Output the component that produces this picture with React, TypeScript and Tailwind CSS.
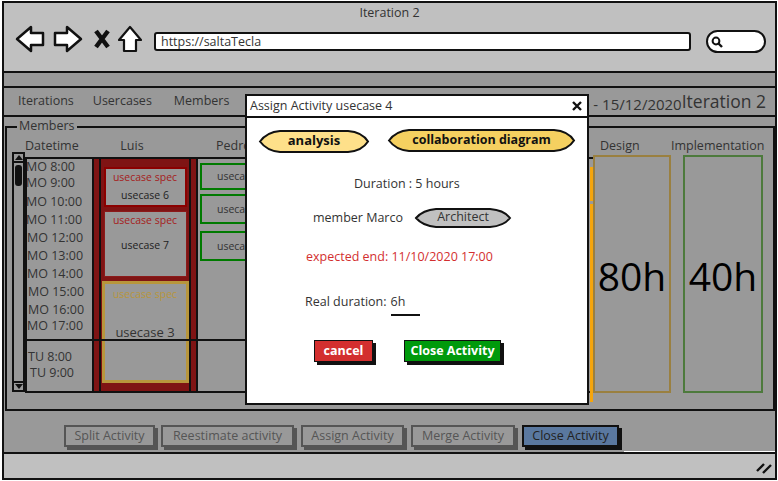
const times = [
  { t: "MO 8:00", c: "" },
  { t: "MO 9:00", c: "" },
  { t: "MO 10:00", c: "mt-[3px]" },
  { t: "MO 11:00", c: "mt-[2px]" },
  { t: "MO 12:00", c: "ml-[1px] mt-[2px]" },
  { t: "MO 13:00", c: "ml-[1px] mt-[2px]" },
  { t: "MO 14:00", c: "ml-[1px] mt-[2px]" },
  { t: "MO 15:00", c: "ml-[2px] mt-[2px]" },
  { t: "MO 16:00", c: "ml-[2px] mt-[2px]" },
  { t: "MO 17:00", c: "ml-[1px]" },
  { t: "TU 8:00", c: "ml-[2px] mt-[15px]" },
  { t: "TU 9:00", c: "ml-[4px]" },
];

function Pill({ w, h, fill, className, children }: { w: number; h: number; fill: string; className: string; children: React.ReactNode }) {
  const m = h / 2;
  const d = `M2 ${m} Q9 3 22 2 L${w - 22} 2 Q${w - 8} 3 ${w - 2} ${m} Q${w - 8} ${h - 3} ${w - 22} ${h - 2} L22 ${h - 2} Q9 ${h - 3} 2 ${m} Z`;
  return (
    <div className={`relative flex items-center justify-center ${className}`}>
      <svg width={w} height={h} className="absolute left-0 top-0">
        <path d={d} fill={fill} stroke="#111" strokeWidth="2" />
      </svg>
      <span className="relative -mt-[1px]">{children}</span>
    </div>
  );
}

function BarButton({ className, children }: { className: string; children: React.ReactNode }) {
  return (
    <button className={`h-[22px] border-2 border-[#555] text-[#555] text-[12.5px] leading-none shadow-[3px_3px_0_#555] ${className}`}>
      {children}
    </button>
  );
}

export default function App() {
  return (
    <div className="relative w-[778px] h-[481px] overflow-hidden bg-white text-[#333] font-['Open_Sans','Noto_Sans',sans-serif]">
      <div className="flex flex-col ml-[2px] mt-[1px] w-[775px] h-[479px] border-2 border-[#111]">
        {/* browser header */}
        <div className="h-[70px] shrink-0 bg-[#c0c0c0] border-b-2 border-[#111]">
          <div className="text-center text-[12.5px] leading-[20px]">Iteration 2</div>
          <div className="flex items-center h-[32px] pl-[11px]">
            <svg width="30" height="28" viewBox="0 0 30 28">
              <path d="M2 14 L16 2 L16 8 L28 8 L28 20 L16 20 L16 26 Z" fill="#fff" stroke="#111" strokeWidth="2.5" strokeLinejoin="round" />
            </svg>
            <svg width="30" height="28" viewBox="0 0 30 28" className="ml-[8px]">
              <path d="M28 14 L14 2 L14 8 L2 8 L2 20 L14 20 L14 26 Z" fill="#fff" stroke="#111" strokeWidth="2.5" strokeLinejoin="round" />
            </svg>
            <svg width="18" height="20" viewBox="0 0 18 20" className="ml-[10px]">
              <path d="M3 2 L15 18 M15 2 L3 18" stroke="#111" strokeWidth="4.5" fill="none" />
            </svg>
            <svg width="24" height="28" viewBox="0 0 24 28" className="ml-[7px]">
              <path d="M12 2 L23 15 L18 15 L18 26 L6 26 L6 15 L1 15 Z" fill="#fff" stroke="#111" strokeWidth="2.2" strokeLinejoin="round" />
            </svg>
            <div className="ml-[12px] mt-[5px] w-[537px] h-[19px] bg-white border-2 border-[#111] rounded-[3px] pl-[5px] text-[12.5px] leading-[15px]">
              https://saltaTecla
            </div>
            <div className="flex items-center ml-[15px] mt-[5px] w-[60px] h-[23px] bg-white border-2 border-[#111] rounded-full pl-[3px]">
              <svg width="12" height="12" viewBox="0 0 12 12">
                <circle cx="5" cy="5" r="3.4" fill="none" stroke="#111" strokeWidth="2" />
                <path d="M7.5 7.5 L11 11" stroke="#111" strokeWidth="2.4" />
              </svg>
            </div>
          </div>
        </div>
        <div className="h-[15px] shrink-0 bg-[#999] border-b-2 border-[#111]" />

        {/* tabs */}
        <div className="flex items-center justify-between h-[29px] shrink-0 bg-[#999] border-b-2 border-[#111] text-[12.5px] pl-[14px]">
          <div className="flex">
            <span>Iterations</span>
            <span className="ml-[19px]">Usercases</span>
            <span className="ml-[22px]">Members</span>
          </div>
          <div className="flex items-center">
            <span className="text-[15px] mt-[5px]">01/10/2020 - 15/12/2020</span>
            <span className="text-[17.5px] mr-[9px] mb-[1px]">Iteration 2</span>
          </div>
        </div>

        {/* members panel */}
        <div className="h-[294px] shrink-0 bg-[#999] pt-[9px] pl-[1px]">
          <div className="relative flex h-[285px] border-2 border-[#111] pl-[5px]">
            <div className="flex w-full text-[12.5px]">
              {/* scrollbar */}
              <div className="flex flex-col shrink-0 w-[13px] h-[240px] mt-[24px] border-2 border-[#111] items-center">
                <div className="w-full h-[9px] border-b-2 border-[#111] flex justify-center items-center">
                  <div className="w-0 h-0 border-x-[4px] border-x-transparent border-b-[5px] border-b-[#111]" />
                </div>
                <div className="mt-[2px] w-[7px] h-[21px] rounded-[3px] bg-[#111]" />
                <div className="mt-auto w-full h-[9px] border-t-2 border-[#111] flex justify-center items-center">
                  <div className="w-0 h-0 border-x-[4px] border-x-transparent border-t-[5px] border-t-[#111]" />
                </div>
              </div>

              {/* datetime */}
              <div className="w-[69px] shrink-0">
                <div className="h-[29px] pt-[10px] pr-[20px] text-center leading-[16px]">Datetime</div>
                <div className="h-[236px] border-y-2 border-x-2 border-[#111] leading-[16px]">
                  <div className="-ml-[1px] whitespace-nowrap">
                    {times.map((x) => (
                      <div key={x.t} className={x.c}>{x.t}</div>
                    ))}
                  </div>
                </div>
              </div>

              {/* Luis */}
              <div className="w-[104px] shrink-0">
                <div className="h-[29px] pt-[10px] pr-[28px] text-center leading-[16px]">Luis</div>
                <div className="h-[236px] border-y-2 border-r-2 border-[#111] bg-[#7f1414] px-[5px]">
                  <div className="h-full flex flex-col items-center border-x-2 border-[#111] pt-[8px]">
                    <div className="flex flex-col items-center w-[83px] h-[40px] bg-[#999] border-2 border-[#8b0000] text-[10.5px] pt-[1px] leading-[14px]">
                      <span className="text-[#a52020]">usecase spec</span>
                      <span className="mt-[4px] text-[#222]">usecase 6</span>
                    </div>
                    <div className="flex flex-col items-center mt-[4px] w-[83px] h-[66px] bg-[#999] border border-[#8b1a1a] text-[10.5px] leading-[14px]">
                      <span className="text-[#a52020] mt-[1px]">usecase spec</span>
                      <span className="mt-[11px] text-[#222]">usecase 7</span>
                    </div>
                    <div className="flex flex-col items-center mt-[4px] w-[87px] h-[102px] bg-[#999] border-[3px] border-[#b8963c] text-[10.5px] leading-[14px]">
                      <span className="text-[#b8963c] mt-[3px]">usecase spec</span>
                      <span className="mt-[24px] text-[13px]">usecase 3</span>
                    </div>
                  </div>
                </div>
              </div>

              {/* Pedro and the columns under the dialog */}
              <div className="w-[395px] shrink-0">
                <div className="h-[29px] pt-[10px] pl-[18px] leading-[16px]">Pedro</div>
                <div className="relative h-[236px] border-y-2 border-[#111]">
                  <div className="flex flex-col gap-[4px] w-[60px] pl-[2px] pt-[4px] text-[10.5px]">
                    <div className="h-[27px] w-[70px] border-2 border-[#007a00] pl-[15px] leading-[23px]">usecase 1</div>
                    <div className="h-[30px] w-[70px] border-2 border-[#007a00] pl-[15px] leading-[26px]">usecase 2</div>
                    <div className="mt-[3px] h-[30px] w-[70px] border-2 border-[#007a00] pl-[15px] leading-[26px]">usecase 4</div>
                  </div>
                  <div className="absolute right-0 top-[8px] h-[34px] w-[3px] bg-[#f5a50c]" />
                  <div className="absolute right-0 top-[45px] -bottom-[11px] w-[3px] bg-[#f5a50c]" />
                </div>
              </div>

              {/* Design */}
              <div className="w-[90px] shrink-0">
                <div className="h-[27px] pt-[10px] pl-[7px] leading-[16px]">Design</div>
                <div className="flex items-center justify-center w-[78px] h-[238px] pt-[5px] border-2 border-[#9a8040] text-[39px] text-black">80h</div>
              </div>

              {/* Implementation */}
              <div className="w-[82px] shrink-0 relative">
                <div className="h-[27px] pt-[10px] leading-[16px] whitespace-nowrap -ml-[12px]">Implementation</div>
                <div className="flex items-center justify-center w-[80px] h-[238px] pt-[5px] border-2 border-[#4d7a3c] text-[39px] text-black">40h</div>
              </div>
            </div>

            {/* legend on the border */}
            <div className="absolute -top-[9px] left-[10px] bg-[#999] px-[2px] text-[12.5px] leading-[14px]">Members</div>
            {/* day divider */}
            <div className="absolute left-[19px] top-[211px] w-[230px] h-[2px] bg-[#111]" />
          </div>
        </div>

        {/* action bar */}
        <div className="flex-1 flex gap-[6px] bg-[#999] pl-[60px] pt-[14px]">
          <BarButton className="w-[91px]">Split Activity</BarButton>
          <BarButton className="w-[133px] mr-[1px]">Reestimate activity</BarButton>
          <BarButton className="w-[103px] mr-[1px]">Assign Activity</BarButton>
          <BarButton className="w-[104px] mr-[1px]">Merge Activity</BarButton>
          <button className="w-[97px] h-[22px] border-2 border-[#111] bg-[#5a789f] text-[#222] text-[12.5px] leading-none shadow-[3px_3px_0_#111]">
            Close Activity
          </button>
        </div>

        {/* status bar */}
        <div className="relative h-[26px] shrink-0 bg-[#c0c0c0] border-t-2 border-[#111]">
          <div className="absolute left-[620px] right-0 -top-[3px] h-[1px] bg-white" />
          <svg width="16" height="12" viewBox="0 0 16 12" className="absolute right-[3px] top-[8px]">
            <path d="M1 9 L8 2 M7 11 L15 3" stroke="#111" strokeWidth="2.4" />
          </svg>
        </div>
      </div>

      {/* dialog */}
      <div className="absolute left-[245px] top-[94px] w-[344px] h-[311px] bg-white border-2 border-[#111] text-[12.5px]">
        <div className="flex items-center justify-between h-[22px] border-b-2 border-[#111] pl-[3px] pr-[5px]">
          <span>Assign Activity usecase 4</span>
          <svg width="10" height="10" viewBox="0 0 10 10">
            <path d="M1 1 L9 9 M9 1 L1 9" stroke="#111" strokeWidth="2.4" />
          </svg>
        </div>
        <div className="flex pl-[11px] pt-[10px] gap-[17px] font-bold text-[#111]">
          <Pill w={112} h={25} fill="#fee08a" className="w-[112px] h-[25px] mt-[1px] text-[13px]">analysis</Pill>
          <Pill w={189} h={25} fill="#f5d060" className="w-[189px] h-[25px]">collaboration diagram</Pill>
        </div>
        <div className="mt-[20px] pl-[107px] leading-[20px]">Duration : 5 hours</div>
        <div className="flex items-center mt-[13px] pl-[66px] h-[22px]">
          <span>member Marco</span>
          <Pill w={98} h={22} fill="#c0c0c0" className="w-[98px] h-[22px] ml-[11px]">Architect</Pill>
        </div>
        <div className="mt-[18px] pl-[59px] leading-[20px] text-[#d32f2f]">expected end: 11/10/2020 17:00</div>
        <div className="flex mt-[25px] pl-[58px] leading-[20px]">
          <span>Real duration:</span>
          <span className="ml-[4px] w-[29px] h-[24px] border-b-2 border-[#111]">6h</span>
        </div>
        <div className="flex mt-[24px] pl-[67px] gap-[31px] font-bold text-white">
          <button className="w-[59px] h-[22px] bg-[#d32f2f] border border-[#111] shadow-[3px_3px_0_#111] leading-none">cancel</button>
          <button className="w-[97px] h-[22px] bg-[#009a0c] border border-[#111] shadow-[3px_3px_0_#111] leading-none">Close Activity</button>
        </div>
      </div>
    </div>
  );
}
